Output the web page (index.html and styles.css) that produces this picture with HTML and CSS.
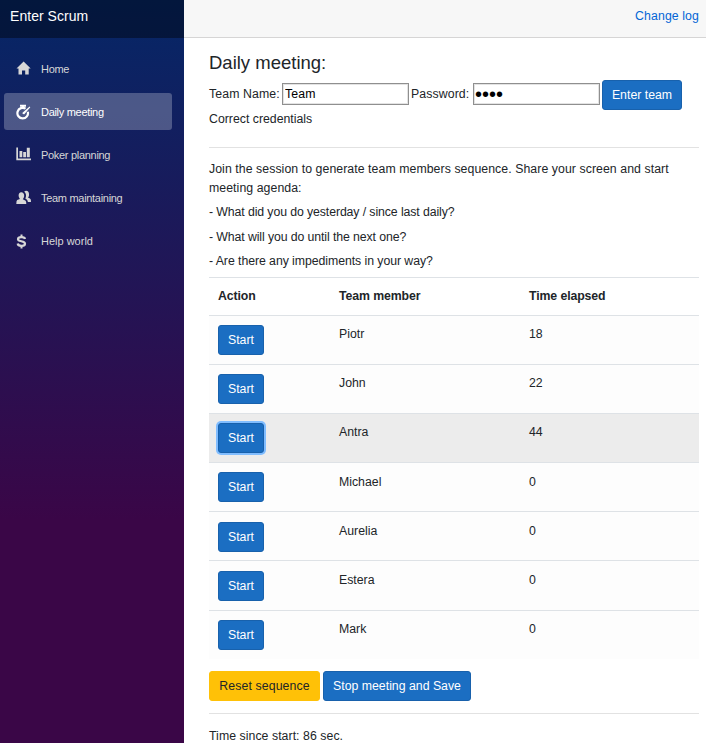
FILE: index.html
```html
<!DOCTYPE html>
<html lang="en">
<head>
<meta charset="utf-8">
<title>Enter Scrum</title>
<link rel="stylesheet" href="styles.css">
</head>
<body>
<div class="app">
  <aside class="sidebar">
    <div class="brand">Enter Scrum</div>
    <nav>
      <a class="nav-link"><svg class="icon" viewBox="0 0 16 16"><path d="M7.600.500.5 7.500h2V13.500H6V9.500h3.200v4h3.500v-6h2z"/></svg><span>Home</span></a>
      <a class="nav-link active"><svg class="icon" viewBox="0 0 16 16"><path class="line" d="M9.600 4.700A5.300 5.300 0 1 0 11.800 7.700"/><path d="M4 .8h6v2H8.300v1.500H5.600V2.800H4zM13.600 2.500l.7.700-6 7-1.600-.2-.2-1.300z"/></svg><span>Daily meeting</span></a>
      <a class="nav-link"><svg class="icon" viewBox="0 0 16 16"><path d="M.3.500H2v11h13V13.200H.3zM3.500 4H6.300v6.300H3.500zM7.200 5H10v5.300H7.200zM10.800.800h3v9.500h-3z"/></svg><span>Poker planning</span></a>
      <a class="nav-link"><svg class="icon" viewBox="0 0 16 16"><path d="M5.300 2.300C3.500 2.300 2.600 3.700 2.600 5.500c0 1.600.8 2.700 1.300 3.400L1.200 10.100Q.3 10.500.3 14h10c0-3-.3-3.300-3.500-4.700C7.500 8.500 8.200 7.300 8.200 5.500c0-1.800-1.100-3.200-2.900-3.200zM10.300.8c-1 0-1.700.3-2.100 1C9.500 2.800 10 4.100 10 5.800c0 1-.3 1.900-.7 2.600 1.700.8 2.300 1.700 2.600 3.600H15c0-3-.4-3.200-3-4.400C12.700 7 13.200 5.800 13 4.100 13 2.100 12 .8 10.300.8z"/></svg><span>Team maintaining</span></a>
      <a class="nav-link wide"><svg class="icon" viewBox="0 0 16 16"><path class="line" d="M9 6C8.800 4.700 7.300 4.200 5.500 4.200S2 4.700 2 6.200C2 9 9 7.500 9 10.700c0 1.600-1.700 2.100-3.500 2.100s-3.600-.6-3.800-2.300"/><path d="M4.500 1.500h2v3h-2zM4.500 12h2v3.500h-2z"/></svg><span>Help world</span></a>
    </nav>
  </aside>
  <main class="main">
    <header class="top-row"><a class="log-link">Change log</a></header>
    <section class="content">
      <h1>Daily meeting:</h1>
      <form class="login">
        <label for="team">Team Name:</label><input id="team" type="text" value="Team">
        <label class="pass-label" for="pass">Password:</label><input id="pass" type="password" value="pass">
        <button type="button" class="btn primary enter"><span>Enter team</span></button>
      </form>
      <p class="status">Correct credentials</p>
      <hr>
      <p class="intro">Join the session to generate team members sequence. Share your screen and start meeting agenda:</p>
      <p class="question">- What did you do yesterday / since last daily?</p>
      <p class="question">- What will you do until the next one?</p>
      <p class="question third">- Are there any impediments in your way?</p>
      <table>
        <thead><tr><th class="c1">Action</th><th class="c2">Team member</th><th>Time elapsed</th></tr></thead>
        <tbody>
          <tr><td><button class="btn primary">Start</button></td><td>Piotr</td><td>18</td></tr>
          <tr><td><button class="btn primary">Start</button></td><td>John</td><td>22</td></tr>
          <tr class="current"><td><button class="btn primary focused">Start</button></td><td>Antra</td><td>44</td></tr>
          <tr class="low raised"><td><button class="btn primary">Start</button></td><td>Michael</td><td>0</td></tr>
          <tr class="low"><td><button class="btn primary">Start</button></td><td>Aurelia</td><td>0</td></tr>
          <tr class="low tall"><td><button class="btn primary">Start</button></td><td>Estera</td><td>0</td></tr>
          <tr><td><button class="btn primary">Start</button></td><td>Mark</td><td>0</td></tr>
        </tbody>
      </table>
      <div class="actions">
        <button class="btn warning">Reset sequence</button>
        <button class="btn primary save">Stop meeting and Save</button>
      </div>
      <hr class="bottom-rule">
      <p class="timer">Time since start: 86 sec.</p>
    </section>
  </main>
</div>
</body>
</html>
```
FILE: styles.css
```css
* { box-sizing: border-box; }
body {
  margin: 0;
  font: 12.3px/19px "Liberation Sans", Arial, sans-serif;
  color: #212529;
  background: #fff;
}
.app { display: flex; height: 743px; overflow: hidden; }
.sidebar {
  width: 184px;
  flex: none;
  background: linear-gradient(180deg, rgb(5, 39, 103) 0%, #3a0647 70%);
}
.brand {
  height: 38px;
  padding: 0 10px;
  background: rgba(0, 0, 0, .4);
  color: #fff;
  font-size: 14px;
  letter-spacing: .04px;
  line-height: 32px;
}
nav { padding: 12px 12px 0 4px; }
.nav-link {
  display: flex;
  align-items: center;
  height: 37px;
  margin-bottom: 6px;
  padding-left: 12px;
  border-radius: 3px;
  color: #d7d7d7;
  font-size: 11px;
  letter-spacing: -.3px;
}
.nav-link span { padding-top: 2px; }
.nav-link.wide { letter-spacing: 0; }
.nav-link.active { background: rgba(255, 255, 255, .25); color: #fff; }
.icon { width: 16px; height: 16px; margin-right: 9px; fill: currentColor; }
.line { fill: none; stroke: currentColor; stroke-width: 2.2; }
.main { flex: 1; min-width: 0; }
.top-row {
  height: 38px;
  padding-right: 7px;
  background: #f7f7f7;
  border-bottom: 1px solid #d6d5d5;
  text-align: right;
  line-height: 32px;
}
.log-link { color: #0366d6; letter-spacing: .1px; }
.content { padding: 13px 7px 0 25px; }
h1 { margin: 0; font-size: 18.5px; font-weight: 400; line-height: 24px; }
.login { display: flex; align-items: center; height: 30px; margin-top: 5px; }
.login label { flex: none; width: 73px; line-height: 28px; padding-bottom: 2px; letter-spacing: .1px; }
.login .pass-label { width: 62px; margin-left: 2px; }
input {
  width: 127px;
  height: 22px;
  margin: -2px 0 0;
  padding: 0 2px;
  border: 1px solid #8f8f8f;
  outline: 1px solid #e3e3e3;
  outline-offset: -2px;
  font: 12.3px "Liberation Sans", Arial, sans-serif;
  letter-spacing: .1px;
  color: #000;
}
#pass { padding: 0 1px; font-size: 20px; letter-spacing: 0; }
.btn {
  display: block;
  width: 46px;
  height: 30px;
  padding: 0;
  border: 1px solid #1861ac;
  border-radius: 3px;
  font: 12.3px/28px "Liberation Sans", Arial, sans-serif;
  white-space: nowrap;
}
.primary { color: #fff; background: #1b6ec2; }
.enter { width: 80px; margin-left: 2px; }
.focused { box-shadow: 0 0 0 2px #80bdff; }
p { margin: 0; }
hr { margin: 18px 0 12px; border: 0; border-top: 1px solid #e2e2e2; }
.question { height: 19px; margin-top: 5.4px; letter-spacing: -.1px; }
.question.third { letter-spacing: -.06px; }
.intro { margin-bottom: 5px; letter-spacing: .065px; }
table {
  width: 490px;
  margin-top: 6px;
  border-collapse: separate;
  border-spacing: 0;
  table-layout: fixed;
}
th, td { padding: 9px 9px 0; border-top: 1px solid #dee2e6; text-align: left; vertical-align: top; }
th { height: 38px; letter-spacing: -.1px; }
td { height: 49px; }
.low td { padding-top: 10px; }
.raised td:first-child { padding-top: 9px; }
.tall td { height: 50px; }
.c1 { width: 121px; }
.c2 { width: 190px; }
tbody tr { background: #fdfdfd; }
tbody .current { background: #ececec; }
.actions { display: flex; gap: 3px; margin-top: 12px; }
.warning { width: 111px; color: #212529; background: #ffc107; border-color: #ffc107; letter-spacing: .1px; }
.save { width: 148px; }
.bottom-rule { margin: 12px 0 13px; }
.timer { letter-spacing: .05px; }
```
